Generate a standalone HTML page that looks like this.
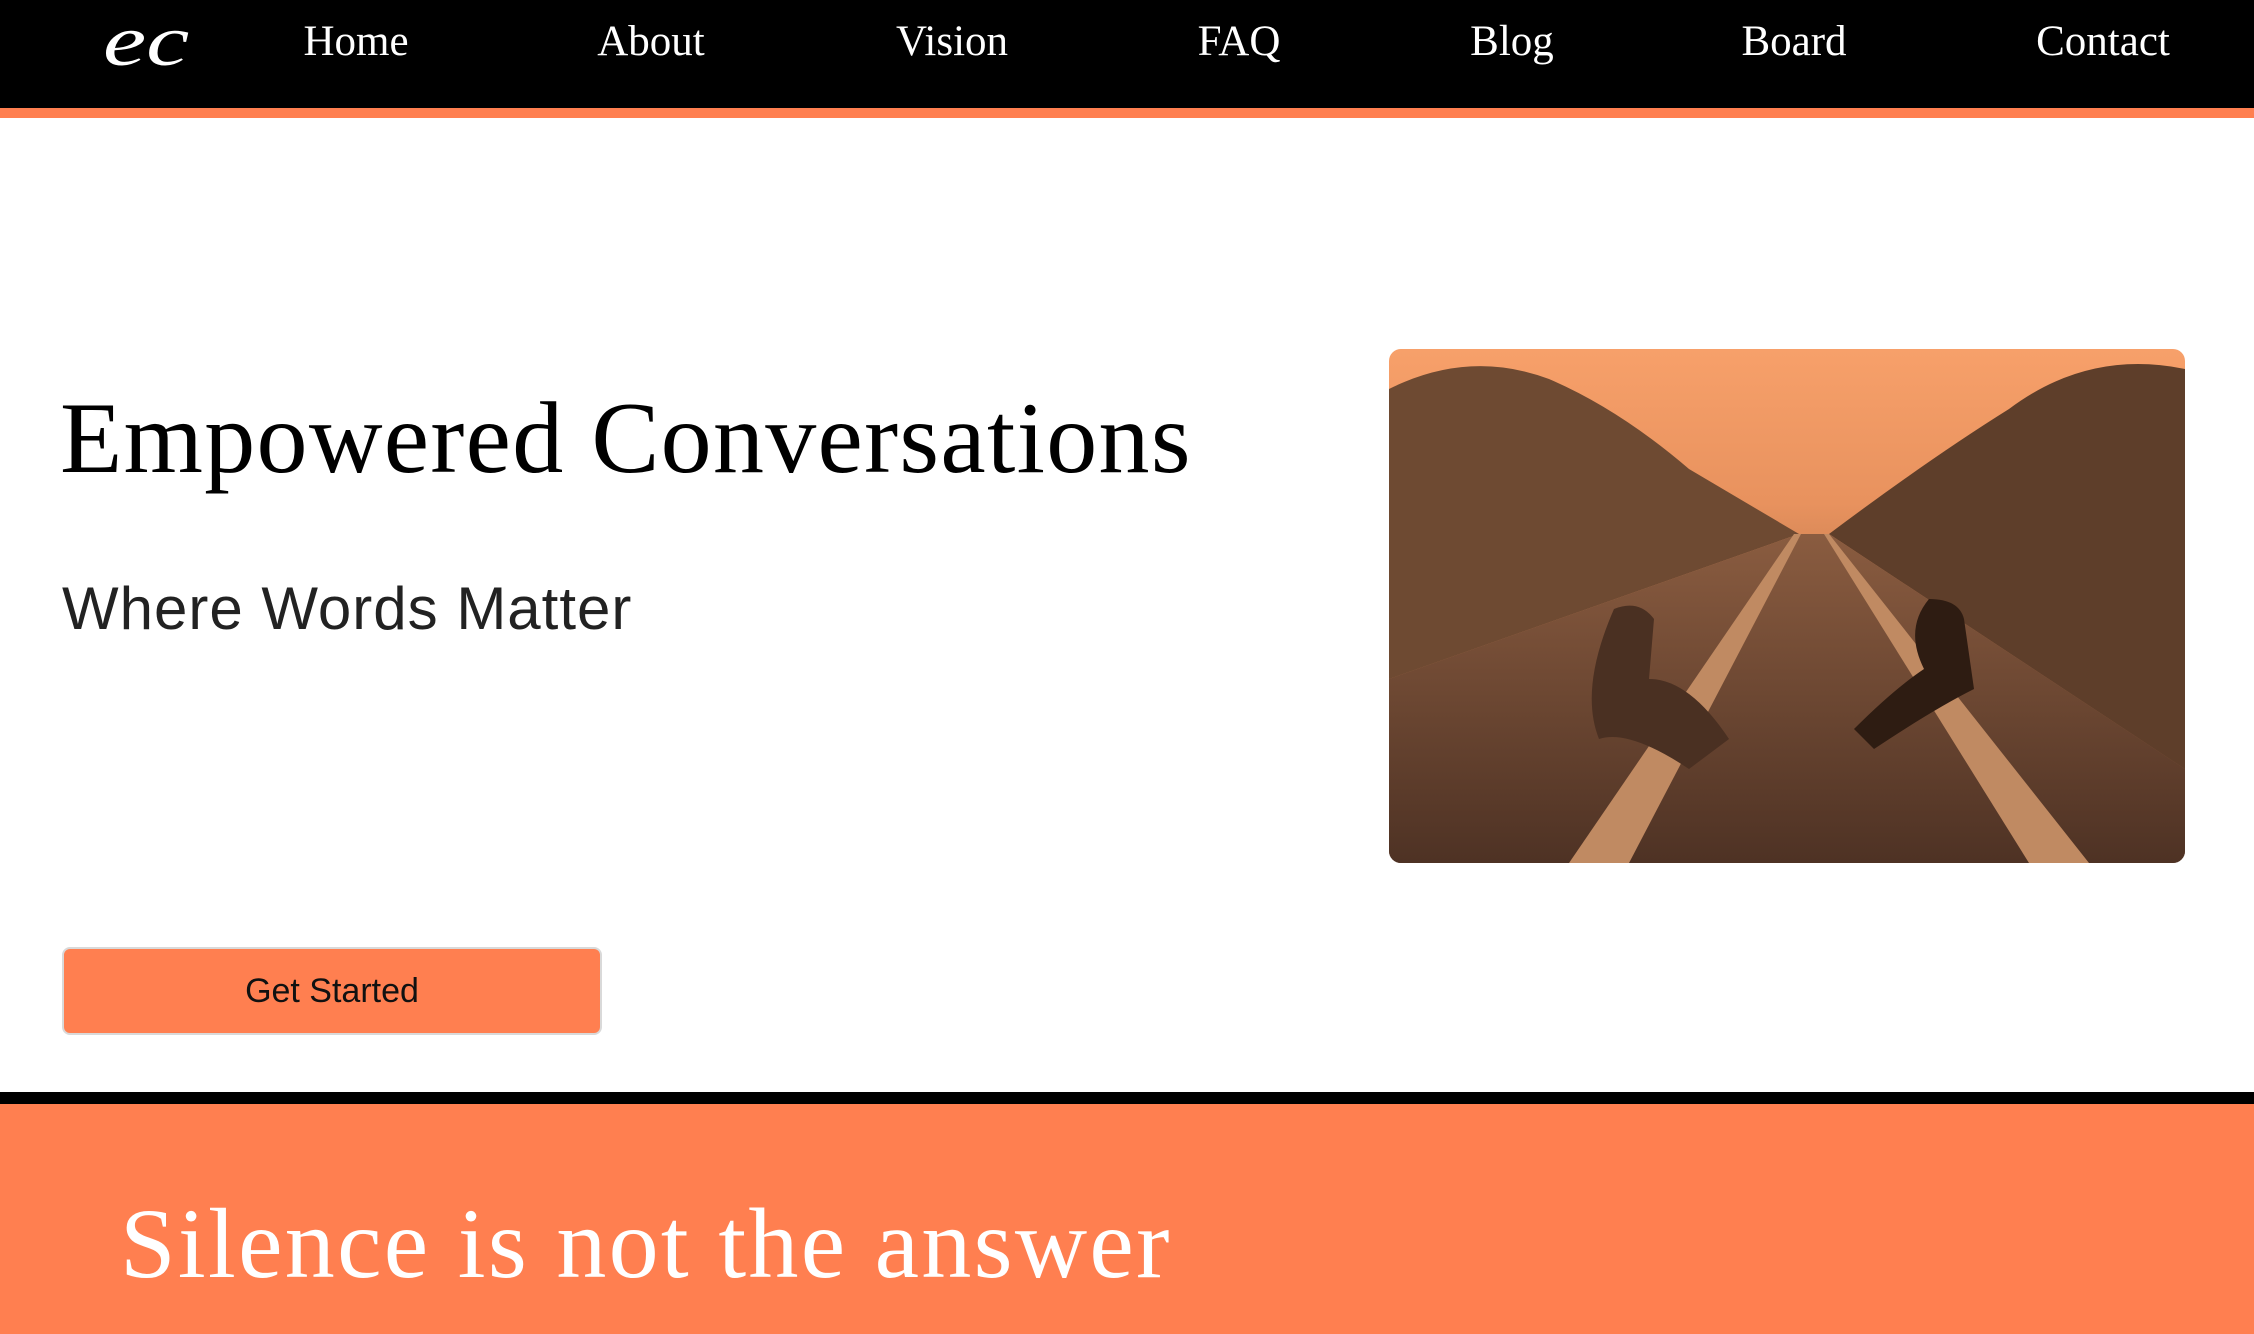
<!DOCTYPE html>
<html><head><meta charset="utf-8"><style>
*{margin:0;padding:0;box-sizing:border-box}
body{width:2254px;height:1334px;overflow:hidden;background:#fff;position:relative;font-family:"Liberation Serif",serif}
.nav{position:absolute;left:0;top:0;width:2254px;background:#000;border-bottom:10px solid #ff7f50;height:118px}
.nav span{position:absolute;top:17px;color:#fff;font-size:43px;transform:translateX(-50%)}
.logo{position:absolute;left:103px;top:0px;color:#fff;font-size:72px;font-style:italic;letter-spacing:0px;transform:scaleX(1.35);transform-origin:left}
h1{position:absolute;left:60px;top:380px;font-weight:normal;font-size:102px;color:#000;white-space:nowrap;letter-spacing:1.3px}
.sub{position:absolute;left:62px;top:574px;font-family:"Liberation Sans",sans-serif;font-size:60px;color:#222;letter-spacing:1px}
.img{position:absolute;left:1389px;top:349px;width:796px;height:514px;border-radius:12px;overflow:hidden}
.btn{position:absolute;left:62px;top:947px;width:540px;height:88px;background:#ff7f50;border:2px solid #d9d9d9;border-radius:8px;font-family:"Liberation Sans",sans-serif;font-size:34px;text-align:center;line-height:84px;color:#111}
.bar{position:absolute;left:0;top:1092px;width:2254px;height:12px;background:#000}
.foot{position:absolute;left:0;top:1104px;width:2254px;height:230px;background:#ff7f50}
.foot div{position:absolute;left:120px;top:82px;color:#fff;font-size:100px;white-space:nowrap;letter-spacing:2.3px}
</style></head><body>
<div class="nav">
<div class="logo">ec</div>
<span style="left:356px">Home</span><span style="left:651px">About</span><span style="left:952px">Vision</span><span style="left:1239px">FAQ</span><span style="left:1512px">Blog</span><span style="left:1794px">Board</span><span style="left:2103px">Contact</span>
</div>
<h1>Empowered Conversations</h1>
<div class="sub">Where Words Matter</div>
<div class="img"><svg width="796" height="514" viewBox="0 0 796 514">
<defs><linearGradient id="s" x1="0" y1="0" x2="0" y2="1"><stop offset="0" stop-color="#f7a06a"/><stop offset=".3" stop-color="#e8925e"/><stop offset="1" stop-color="#6a4630"/></linearGradient>
<linearGradient id="g" x1="0" y1="0" x2="0" y2="1"><stop offset="0" stop-color="#8a5c40"/><stop offset="1" stop-color="#4e3224"/></linearGradient></defs>
<rect width="796" height="514" fill="url(#s)"/>
<path d="M0 40 Q80 0 160 30 Q230 60 300 120 L410 185 L0 330Z" fill="#6e4a32"/>
<path d="M796 20 Q700 0 620 60 Q540 110 440 185 L796 420Z" fill="#5e3e2a"/>
<path d="M0 330 L410 185 L440 185 L796 420 L796 514 L0 514Z" fill="url(#g)"/>
<path d="M405 185 L180 514 L240 514 L412 185Z" fill="#c08a62"/>
<path d="M435 185 L640 514 L700 514 L440 185Z" fill="#c08a62"/>
<path d="M225 260 q25 -10 40 10 l-5 60 q40 0 80 60 l-40 30 q-60 -40 -90 -30 q-20 -50 15 -130Z" fill="#4a3022"/>
<path d="M540 250 q30 0 35 20 l10 70 q-40 20 -100 60 l-20 -20 q40 -40 70 -60 q-20 -40 5 -70Z" fill="#2e1c12"/>
</svg></div>
<div class="btn">Get Started</div>
<div class="bar"></div>
<div class="foot"><div>Silence is not the answer</div></div>
</body></html>
